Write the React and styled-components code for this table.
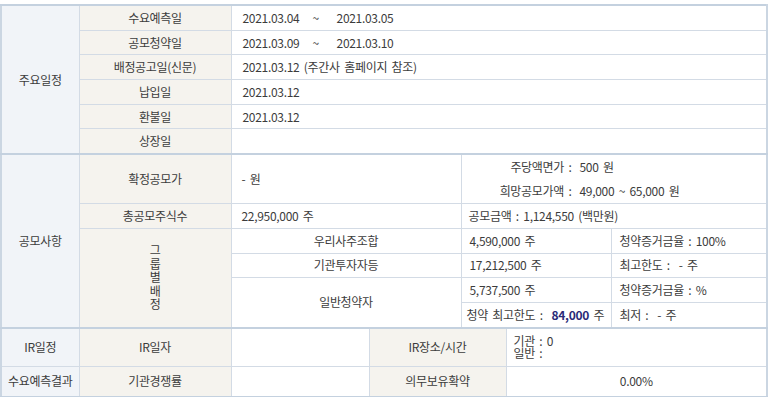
import React from 'react'
import styled, { createGlobalStyle } from 'styled-components'

const GlobalStyle = createGlobalStyle`
  body {
    margin: 0;
    background: #fff;
    font-family: "Noto Sans CJK KR", "Noto Sans", sans-serif;
  }
`

const Wrap = styled.div`
  padding-top: 4px;
`

const Table = styled.table`
  width: 766px;
  border-collapse: collapse;
  table-layout: fixed;
  font-size: 12px;
  letter-spacing: -0.3px;
  word-spacing: 2px;
  color: #3c3c3c;
  border-top: 2px solid #c4d1df;
  border-bottom: 2px solid #c4d1df;
  border-left: 2px solid #cbd6e2;
  border-right: 2px solid #cbd6e2;
`

const Section = styled.tbody`
  & + & {
    border-top: 2px solid #c4d1df;
  }
`

const bg = { head: '#f1f4f8', label: '#f5f3ee', value: '#ffffff' }

const Cell = styled.td`
  height: ${p => p.$h || 23.7}px;
  padding: 0 ${p => (p.$pad ?? 10)}px;
  border: 1px solid #d3dbe5;
  background: ${p => bg[p.$kind || 'value']};
  text-align: ${p => p.$align || (p.$kind && p.$kind !== 'value' ? 'center' : 'left')};
  vertical-align: middle;
  line-height: 16px;
  white-space: pre;
  overflow: hidden;
`

const PairLine = styled.div`
  display: flex;
  line-height: 24px;
`

const PairKey = styled.span`
  width: 104px;
  text-align: right;
`

const PairVal = styled.span`
  margin-left: 8px;
`

const Vertical = styled.span`
  display: inline-block;
  width: 12px;
  line-height: 13.5px;
  white-space: normal;
  word-break: break-all;
`

const Strong = styled.b`
  color: #2a2b78;
  font-weight: bold;
`

const Lines = styled.div`
  line-height: 12px;
  white-space: pre;
`

const widths = [78, 152, 138, 92, 45, 105, 156]

const schedule = [
  ['수요예측일', '2021.03.04   ~    2021.03.05'],
  ['공모청약일', '2021.03.09   ~    2021.03.10'],
  ['배정공고일(신문)', '2021.03.12 (주간사 홈페이지 참조)'],
  ['납입일', '2021.03.12'],
  ['환불일', '2021.03.12'],
  ['상장일', ''],
]

export default function App() {
  return (
    <Wrap>
      <GlobalStyle />
      <Table>
        <colgroup>
          {widths.map((w, i) => <col key={i} style={{ width: w }} />)}
        </colgroup>

        <Section>
          {schedule.map(([label, value], i) => (
            <tr key={label}>
              {i === 0 && <Cell $kind="head" rowSpan={6}>주요일정</Cell>}
              <Cell $kind="label">{label}</Cell>
              <Cell colSpan={5} $pad={11}>{value}</Cell>
            </tr>
          ))}
        </Section>

        <Section>
          <tr>
            <Cell $kind="head" rowSpan={6}>공모사항</Cell>
            <Cell $kind="label" $h={47}>확정공모가</Cell>
            <Cell colSpan={2}>- 원</Cell>
            <Cell colSpan={3} $pad={6}>
              <PairLine><PairKey>주당액면가 :</PairKey><PairVal>500 원</PairVal></PairLine>
              <PairLine><PairKey>희망공모가액 :</PairKey><PairVal>49,000 ~ 65,000 원</PairVal></PairLine>
            </Cell>
          </tr>
          <tr>
            <Cell $kind="label">총공모주식수</Cell>
            <Cell colSpan={2}>22,950,000 주</Cell>
            <Cell colSpan={3} $pad={7}>공모금액 : 1,124,550 (백만원)</Cell>
          </tr>
          <tr>
            <Cell $kind="label" rowSpan={4}><Vertical>그룹별배정</Vertical></Cell>
            <Cell colSpan={2} $align="center">우리사주조합</Cell>
            <Cell colSpan={2} $pad={8}>4,590,000 주</Cell>
            <Cell $pad={8}>청약증거금율 : 100%</Cell>
          </tr>
          <tr>
            <Cell colSpan={2} $align="center">기관투자자등</Cell>
            <Cell colSpan={2} $pad={8}>17,212,500 주</Cell>
            <Cell $pad={8}>최고한도 :  - 주</Cell>
          </tr>
          <tr>
            <Cell colSpan={2} rowSpan={2} $align="center">일반청약자</Cell>
            <Cell colSpan={2} $pad={8}>5,737,500 주</Cell>
            <Cell $pad={8}>청약증거금율 : %</Cell>
          </tr>
          <tr>
            <Cell colSpan={2} $pad={5}>청약 최고한도 :  <Strong>84,000</Strong> 주</Cell>
            <Cell $pad={8}>최저 :  - 주</Cell>
          </tr>
        </Section>

        <Section>
          <tr>
            <Cell $kind="head" $h={37} $pad={4}>IR일정</Cell>
            <Cell $kind="label">IR일자</Cell>
            <Cell />
            <Cell $kind="label" colSpan={2}>IR장소/시간</Cell>
            <Cell colSpan={2} $pad={7}>
              <Lines>{'기관 : 0\n일반 :'}</Lines>
            </Cell>
          </tr>
          <tr>
            <Cell $kind="head" $h={29} $pad={2}>수요예측결과</Cell>
            <Cell $kind="label">기관경쟁률</Cell>
            <Cell />
            <Cell $kind="label" colSpan={2}>의무보유확약</Cell>
            <Cell colSpan={2} $align="center">0.00%</Cell>
          </tr>
        </Section>
      </Table>
    </Wrap>
  )
}
